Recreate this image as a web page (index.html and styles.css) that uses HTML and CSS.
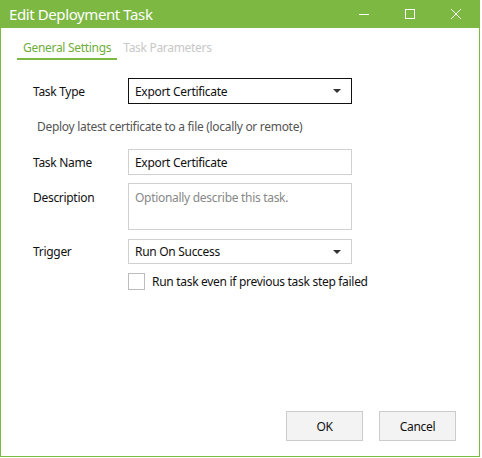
FILE: index.html
```html
<!DOCTYPE html>
<html lang="en">
<head>
  <meta charset="UTF-8">
  <meta name="viewport" content="width=device-width, initial-scale=1.0">
  <link rel="stylesheet" href="styles.css">
  <title>Edit Deployment Task</title>
</head>
<body>

  <div class="window">
    <div class="title-bar">
      <span class="title">Edit Deployment Task</span>
      <div class="window-buttons">
        <svg class="win-btn" width="10" height="10" viewBox="0 0 10 10"><path d="M0 5.5h10" stroke="#fff" stroke-width="1"/></svg>
        <svg class="win-btn" width="10" height="10" viewBox="0 0 10 10"><rect x="0.5" y="0.5" width="9" height="9" fill="none" stroke="#fff" stroke-width="1"/></svg>
        <svg class="win-btn" width="10" height="10" viewBox="0 0 10 10"><path d="M0 0L10 10M10 0L0 10" stroke="#fff" stroke-width="1"/></svg>
      </div>
    </div>

    <div class="content">
      <div class="tabs">
        <div class="tab tab-active">General Settings</div>
        <div class="tab">Task Parameters</div>
      </div>

      <div class="form">
        <div class="row">
          <label class="label">Task Type</label>
          <div class="field select select-focus">
            <span>Export Certificate</span>
            <svg width="8" height="4" viewBox="0 0 8 4"><path d="M0 0h8L4 4z" fill="#333"/></svg>
          </div>
        </div>

        <div class="hint">Deploy latest certificate to a file (locally or remote)</div>

        <div class="row">
          <label class="label">Task Name</label>
          <div class="field">Export Certificate</div>
        </div>

        <div class="row row-top">
          <label class="label">Description</label>
          <div class="field textarea">Optionally describe this task.</div>
        </div>

        <div class="row trigger-row">
          <label class="label">Trigger</label>
          <div class="field select trigger">
            <span>Run On Success</span>
            <svg width="8" height="4" viewBox="0 0 8 4"><path d="M0 0h8L4 4z" fill="#333"/></svg>
          </div>
        </div>

        <div class="row check-row">
          <span class="checkbox"></span>
          <span>Run task even if previous task step failed</span>
        </div>
      </div>

      <div class="buttons">
        <button class="btn">OK</button>
        <button class="btn">Cancel</button>
      </div>
    </div>
  </div>

</body>
</html>
```

FILE: styles.css
```css
body {
  margin: 0;
  padding: 0;
  background-color: #fff;
  font-family: "Noto Sans", "Open Sans", sans-serif;
  font-size: 12px;
  letter-spacing: -0.3px;
  color: #111;
}

.window {
  width: 478px;
  height: 456px;
  border: 1px solid #7db843;
  border-top: none;
  display: flex;
  flex-direction: column;
  background-color: #fff;
}

.title-bar {
  height: 28px;
  background-color: #7db843;
  display: flex;
  align-items: center;
  justify-content: space-between;
  padding-left: 8px;
}

.title {
  color: #fff;
  font-size: 15px;
  letter-spacing: -0.4px;
}

.window-buttons {
  display: flex;
  height: 100%;
}

.win-btn {
  width: 46px;
  height: 28px;
  padding: 9px 18px;
  box-sizing: border-box;
}

.content {
  flex: 1;
  display: flex;
  flex-direction: column;
}

.tabs {
  display: flex;
  padding-left: 16px;
  margin-top: 11px;
}

.tab {
  padding: 0 6px 2px 6px;
  color: #c8c8c8;
  border-bottom: 2px solid transparent;
}

.tab-active {
  color: #6fae3a;
  border-bottom-color: #7db843;
}

.form {
  padding-left: 32px;
  margin-top: 18px;
  display: flex;
  flex-direction: column;
}

.row {
  display: flex;
  align-items: center;
}

.row-top {
  align-items: flex-start;
  margin-top: 8px;
}

.row-top .label {
  padding-top: 6px;
}

.label {
  width: 95px;
}

.field {
  width: 224px;
  height: 26px;
  box-sizing: border-box;
  border: 1px solid #d0d0d0;
  padding: 0 6px;
  display: flex;
  align-items: center;
  justify-content: space-between;
}

.select-focus {
  border-color: #111;
}

.select svg {
  margin-right: 4px;
}

.hint {
  color: #555;
  padding-left: 4px;
  margin: 14px 0 14px 0;
}

.textarea {
  height: 47px;
  align-items: flex-start;
  padding-top: 5px;
  color: #888;
}

.trigger-row {
  margin-top: 9px;
}

.trigger {
  height: 25px;
}

.check-row {
  padding-left: 95px;
  margin-top: 9px;
}

.checkbox {
  width: 17px;
  height: 17px;
  box-sizing: border-box;
  border: 1px solid #bcbcbc;
  margin-right: 7px;
}

.buttons {
  margin-top: auto;
  margin-bottom: 15px;
  display: flex;
  justify-content: flex-end;
  gap: 16px;
  padding-right: 23px;
}

.btn {
  width: 77px;
  height: 30px;
  background-color: #f3f3f3;
  border: 1px solid #cccccc;
  font-family: inherit;
  font-size: 12px;
  letter-spacing: -0.3px;
  color: #111;
}
```
